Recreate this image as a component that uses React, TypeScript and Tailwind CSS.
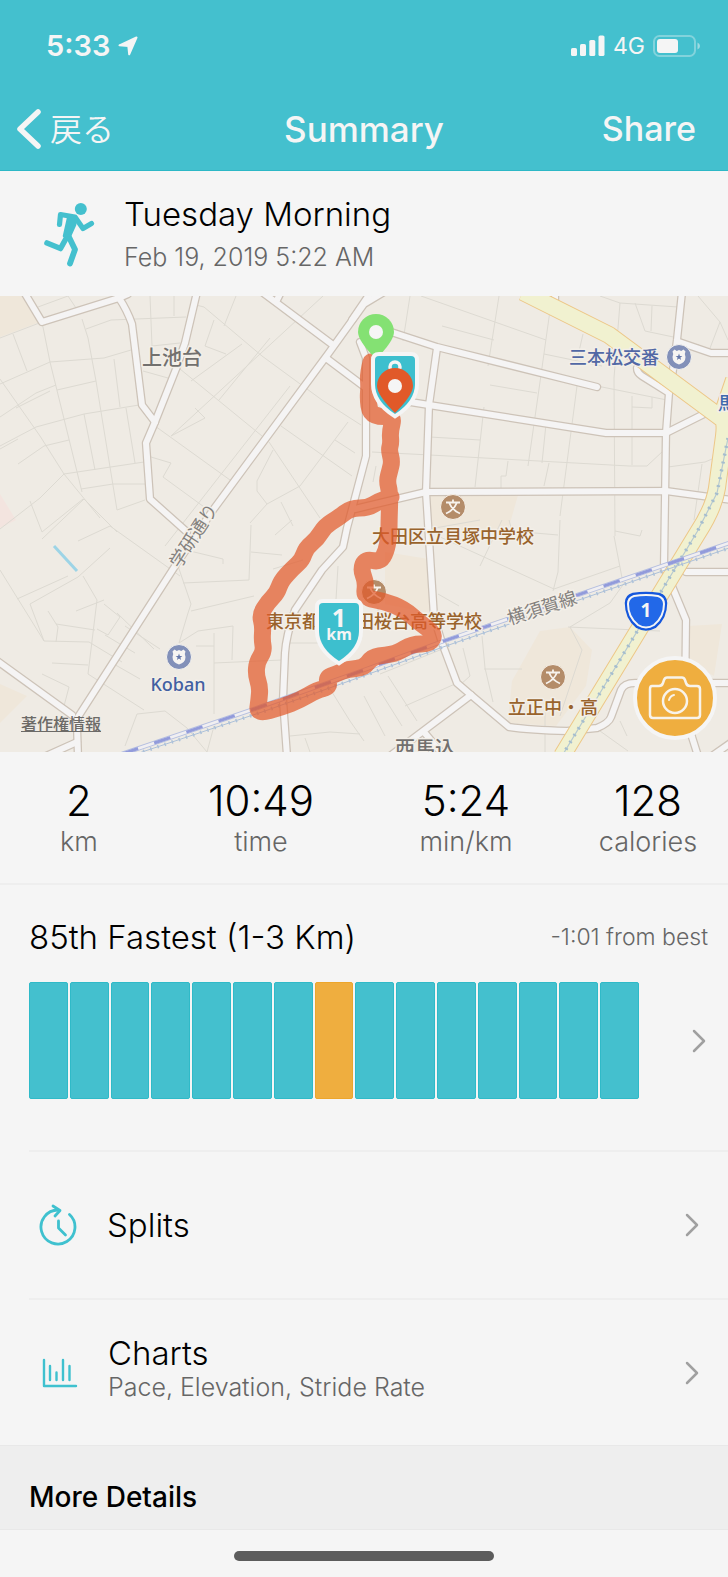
import React from "react";

const inter = "font-['Inter','Noto_Sans_CJK_JP',sans-serif]";

function StatusBar() {
  return (
    <div className="flex h-[91px] items-center justify-between pl-[46px] pr-[27px]">
      <div className="flex items-center gap-2">
        <span className="text-[29px] leading-8 font-semibold">5:33</span>
        <svg viewBox="0 0 20 20" className="h-5 w-5" fill="currentColor" stroke="currentColor" strokeWidth="2" strokeLinejoin="round" aria-hidden="true">
          <path d="M18.500 1.500 11.200 18.300 10.300 9.900 1.500 9.300Z" />
        </svg>
      </div>
      <div className="flex items-center gap-2">
        <svg viewBox="0 0 34 22" className="h-[22px] w-[34px]" fill="currentColor" aria-hidden="true">
          <rect x="0" y="13" width="6" height="8" rx="1.600" />
          <rect x="9" y="9" width="6" height="12" rx="1.600" />
          <rect x="18.300" y="5" width="6" height="16" rx="1.600" />
          <rect x="27.500" y="0.500" width="6" height="20.500" rx="1.600" />
        </svg>
        <span className="text-[23px] leading-8">4G</span>
        <svg viewBox="0 0 48 24" className="h-6 w-12" fill="none" aria-hidden="true">
          <rect x="1" y="2" width="41" height="20" rx="5.500" stroke="#f5f5f5" strokeOpacity=".35" strokeWidth="2" />
          <rect x="4" y="5" width="21" height="14" rx="3" fill="#f5f5f5" />
          <path d="M44.500 8.500q2.500 1 2.500 3.500t-2.500 3.500z" fill="#f5f5f5" fillOpacity=".5" />
        </svg>
      </div>
    </div>
  );
}

function Header() {
  return (
    <header className="border-b border-[#2db8c6] bg-[#44c0ce] text-[#f5f5f5]">
      <StatusBar />
      <nav className="grid h-[79px] grid-cols-3 items-center px-4 pb-1">
        <button type="button" className="flex items-center gap-2 justify-self-start">
          <svg viewBox="0 0 26 42" className="h-[42px] w-[26px]" fill="none" stroke="currentColor" strokeWidth="5.500" strokeLinecap="round" strokeLinejoin="round" aria-hidden="true">
            <path d="M22 4 4 21 22 38" />
          </svg>
          <span className="pb-1 font-['Noto_Sans_CJK_JP',sans-serif] text-[32px] leading-10 font-[350]">戻る</span>
        </button>
        <h1 className="justify-self-center text-[35px] leading-10 font-medium">Summary</h1>
        <button type="button" className="justify-self-end pr-4 text-[34px] leading-10 font-medium">Share</button>
      </nav>
    </header>
  );
}

function Runner() {
  return (
    <svg viewBox="0 0 52 66" className="h-[66px] w-[52px] shrink-0" fill="none" stroke="#44c0ce" strokeLinecap="round" strokeLinejoin="round" aria-hidden="true">
      <circle cx="37.800" cy="8" r="6" fill="#44c0ce" stroke="none" />
      <path d="M16.500 23.500 17.500 13.500 32 16 40 27.500 48.500 22.500" strokeWidth="5.200" />
      <path d="M4 42 17.500 47.500 25 34" strokeWidth="5.600" />
      <path d="M24.500 33 32 48.500 27 62.500" strokeWidth="5.800" />
      <path d="M25.500 15 33.500 17 32 24 27.500 34 21 35Z" fill="#44c0ce" strokeWidth="2.500" />
    </svg>
  );
}

const minorStreets = [
  "M0 88 50 66 104 62 131 54 M42 26 50 66 82 196 M0 83 40 140 64 178 100 222 M13 38 27 75 M38 11 68 0 M68 0 80 18",
  "M0 121 36 97 56 89 M16 112 50 95 M0 42 42 26 M57 94 96 85 88 42 82 23 M86 33 111 24 186 21 M150 0 152 50 M174 0 174 20",
  "M0 150 36 131 84 118 139 109 M0 153 18 143 M18 168 44 150 69 144 M96 85 117 214 145 204 M84 118 95 174 M114 63 120 111 M126 112 135 167",
  "M64 178 144 166 M81 193 113 188 145 188 M64 178 40 202 0 233 M84 203 42 243 M84 203 117 236 M30 205 42 236 83 203",
  "M143 75 168 82 M152 50 180 47 M196 9 204 11 262 60 322 104 361 129 M236 0 224 30 M214 24 205 50 226 58",
  "M180 73 262 140 M242 48 191 85 M270 42 219 104 M323 0 171 140 M195 112 205 122 171 140 M155 130 230 184 M151 161 171 167 M171 167 163 181 211 216 M290 90 165 250",
  "M281 130 352 180 M269 146 320 222 M273 154 257 185 257 195 267 208 300 190 348 126 M335 144 355 157 M281 206 293 230 M250 227 267 208",
  "M0 274 44 345 M30 308 78 281 110 252 M17 303 68 280 M30 308 44 345 89 346 122 366 M83 280 97 304 88 378 144 414 M48 315 58 331 56 346 M76 315 104 304",
  "M42 378 69 391 64 410 M52 367 88 369 M78 245 110 230 180 280 M104 308 120 321 108 339 97 333 M56 328 95 334 M105 339 135 357 M125 330 160 353",
  "M177 267 191 308 188 317 179 347 M183 287 249 284 251 229 M191 315 254 300 M117 317 154 353 M179 347 198 335 233 330 232 364 M214 337 214 418 M196 350 214 350 M214 367 282 364",
  "M112 367 140 383 M125 450 137 418 165 415 187 432 207 456 M190 255 223 263 223 268 M275 239 292 224 M273 273 303 264 M251 256 282 259 M338 270 335 320",
  "M290 347 322 347 M327 388 350 425 364 445 M290 440 330 436 360 438 M305 442 310 456 M214 430 207 456",
  "M410 0 403 45 M499 0 488 70 M421 0 546 44 M442 30 494 44 M552 0 540 86 528 170 M583 38 577 64",
  "M544 58 602 70 M490 89 537 97 M620 7 614 82 615 240 M597 90 667 104 M600 0 620 7 678 11 M635 7 645 35 678 42 M652 10 651 35",
  "M372 156 430 159 629 170 647 170 663 155 M430 141 480 144 M376 170 373 186 M668 171 705 166 724 158 M702 168 694 224",
  "M484 111 475 191 M546 128 542 167 M508 165 506 180 501 180 501 195 M549 167 544 190 M577 90 560 220 M632 100 632 169 M632 111 652 112 652 101 M698 0 720 26 728 44 M720 26 707 60 698 48",
  "M390 240 480 224 M438 240 554 293 620 270 M502 224 480 270 M560 224 558 276 553 295 M614 240 623 287 M625 286 610 307 570 331",
  "M438 298 459 310 M509 224 512 235 558 239 M615 235 640 240 642 234 M460 340 490 327 616 285 M482 340 485 372 493 406 M463 352 470 380 M484 373 522 373",
  "M455 388 405 410 M445 352 380 378 M568 331 660 335 M570 331 582 354 560 420 M545 406 545 456 M600 435 628 455 M620 425 627 440",
  "M380 395 402 430 M364 400 385 440 M388 380 417 425 M460 389 470 380 M378 330 378 312",
];

const roads = [
  "M24 -4 42 26 119 2 128 -2",
  "M119 2 Q127 14 132 28 L142 109 155 126",
  "M197 -4 185 47 176 73 155 126 146 147 150 203 187 236",
  "M384 -4 364 8 328 58 213 214 177 267 78 421 77 430 78 460",
  "M371 -4 352 24 M281 -4 277 4",
  "M262 -4 333 49 M326 62 366 92",
  "M-4 364 72 419 M77 446 46 460",
  "M360 46 366 62 366 160 347 232 343 251 322 274 295 314 Q286 340 285 357 L283 404 287 460",
  "M385 34 437 51 597 91",
  "M437 52 429 109 426 196 434 321 442 347 457 387 471 399 509 431 Q530 434 567 435 L597 432 Q609 427 611 421 L621 394 Q624 387 635 387 L732 387",
  "M471 399 390 460 M424 436 444 460",
  "M404 105 429 109 606 137 666 137 706 117",
  "M682 -4 677 44 672 81 669 97 666 137 664 271 686 324 685 410 692 441 698 460",
  "M637 72 Q637 77 642 80 L669 97 M679 46 711 57 732 57",
  "M355 213 426 196 666 195 732 204",
  "M686 276 732 276 M712 460 732 446 M555 -4 555 8",
];

const highway = "M523 -4 609 39 721 122 Q726 124 724 140 L717 192 Q714 212 697 238 L562 460 M721 122 734 84";
const rail = "M122 458 260 411 364 374 441 346 732 246";
const subway = "M136 458 262 416 366 379 443 351 732 251";

const trackPoints: [number, number][] = [
  [371, 66], [368, 78], [369, 90], [368, 103], [370, 117], [380, 121], [394, 120], [390, 136],
  [391, 147], [389, 154], [392, 165], [390, 174], [387, 185], [390, 197], [389, 226], [389, 240],
  [386, 256], [380, 266], [365, 263], [361, 274], [366, 286], [364, 302], [384, 305], [404, 313],
  [420, 327], [435, 338], [430, 348], [412, 348], [397, 357], [386, 359], [372, 361], [364, 372],
  [348, 373], [336, 378], [326, 382], [330, 391], [317, 394], [300, 404], [282, 411], [257, 418],
  [259, 404], [260, 391], [256, 379], [257, 366], [264, 355], [262, 344], [263, 330], [260, 319],
  [268, 306], [277, 297], [281, 285], [293, 272], [302, 264], [306, 252], [317, 243], [325, 230],
  [338, 222], [351, 212], [368, 212], [379, 205], [391, 201],
];

function smooth(points: [number, number][]) {
  const last = points.length - 1;
  const middle = points.slice(1, last).map(([x, y], i) => {
    const [nx, ny] = points[i + 2];
    return `Q${x} ${y} ${(x + nx) / 2} ${(y + ny) / 2}`;
  });
  return `M${points[0].join(" ")}${middle.join("")}L${points[last].join(" ")}`;
}

function School({ x, y }: { x: number; y: number }) {
  return (
    <g transform={`translate(${x} ${y})`}>
      <circle r="12.500" fill="#b48c69" stroke="#f7f1e9" />
      <path d="M0-7.500V-4.500M-7-4.500H7M-4-4.500Q-1 3 7 6.500M4-4.500Q1 3-7 6.500" fill="none" stroke="#f7f3ee" strokeWidth="1.800" />
    </g>
  );
}

function Police({ x, y }: { x: number; y: number }) {
  return (
    <g transform={`translate(${x} ${y})`}>
      <circle r="12.500" fill="#8290b9" stroke="#f5f3ef" />
      <path d="M-6.500-5.500-4.500-7.500-2.200-6 0-7 2.200-6 4.500-7.500 6.500-5.500Q5-3 6.500 0 6.500 5.500 0 7.500-6.500 5.500-6.500 0-5-3-6.500-5.500Z" fill="#f6f4f2" />
      <path d="M0-3.500 .9-1 3.400-1 1.400.6 2.100 3 0 1.600-2.100 3-1.400.6-3.400-1-.9-1Z" fill="#6477aa" />
    </g>
  );
}

function Pin({ x, y, color }: { x: number; y: number; color: string }) {
  return (
    <g transform={`translate(${x} ${y})`}>
      <path d="M0 27Q-18 9-18 0A18 18 0 0 1 18 0Q18 9 0 27Z" fill={color} />
      <circle r="7" fill="#f5f5f5" />
    </g>
  );
}

const shield = "M-16-28H16Q20-28 20-24V0Q20 17 0 30Q-20 17-20 0V-24Q-20-28-16-28Z";

function RouteMap() {
  return (
    <section className="relative overflow-hidden" aria-label="Route map">
      <svg viewBox="0 0 728 456" className="block w-full font-['Noto_Sans_CJK_JP',sans-serif]" role="img" aria-label="Map of the run">
        <rect width="728" height="456" fill="#efebe4" />
        <path d="M0 0H24L40 26 0 41Z M0 388 27 400 0 427Z M430 200 518 199 508 234 430 234Z M385 256 429 263 434 318 385 308Z M540 335 570 331 592 354 586 390 556 430 508 427 512 385Z M688 330 722 328 714 380 687 365Z" fill="#efe7da" />
        <path d="M0 198 16 224 0 232Z" fill="#f3e4df" />
        <g fill="none" stroke="#dddad2" strokeWidth="1">
          {minorStreets.map((d) => <path key={d} d={d} />)}
        </g>
        <g fill="none" stroke="#cdc3b8" strokeWidth="8.500" strokeLinejoin="round" strokeLinecap="round">
          {roads.map((d) => <path key={d} d={d} />)}
        </g>
        <g fill="none" stroke="#f5f4f4" strokeWidth="6" strokeLinejoin="round" strokeLinecap="round">
          {roads.map((d) => <path key={d} d={d} />)}
        </g>
        <g fill="none" strokeLinejoin="round">
          <path d={highway} stroke="#edc787" strokeWidth="18" />
          <path d={highway} stroke="#f1f1d0" strokeWidth="16" />
          <path d="M728 142 717 197 697 236 562 460" stroke="#b5c9d0" strokeWidth="1.200" />
          <path d="M728 142 717 197 697 236 562 460" stroke="#a5bdce" strokeWidth="3.500" strokeDasharray="2 6" />
          <path d={rail} stroke="#b5bfe0" strokeWidth="4.500" />
          <path d={rail} stroke="#f1eff1" strokeWidth="2.800" />
          <path d={rail} stroke="#929bdb" strokeWidth="3" strokeDasharray="17 17" />
          <path d={subway} stroke="#adc1d9" strokeWidth="1" />
          <path d={subway} stroke="#adc1d9" strokeWidth="3.500" strokeDasharray="1.500 6" />
          <path d="M54 250 77 275" stroke="#9dd4e6" strokeWidth="3" />
        </g>

        <g className="font-medium" paintOrder="stroke" stroke="#f3efe8" strokeWidth="3" strokeLinejoin="round">
          <text x="172" y="69" textAnchor="middle" fontSize="20" fill="#72706e">上池台</text>
          <text x="425" y="460" textAnchor="middle" fontSize="20" fill="#72706e">西馬込</text>
          <text x="614" y="68" textAnchor="middle" fontSize="18" fill="#5268a5">三本松交番</text>
          <text x="178" y="395" textAnchor="middle" fontSize="18" fill="#4260a2" className="font-['Noto_Sans',sans-serif]">Koban</text>
          <text x="718" y="114" fontSize="18" fill="#3d69ae">馬込</text>
          <text x="453" y="247" textAnchor="middle" fontSize="18" fill="#99632c">大田区立貝塚中学校</text>
          <text x="266" y="332" fontSize="18" fill="#99632c">東京都</text>
          <text x="482" y="332" textAnchor="end" fontSize="18" fill="#99632c">田桜台高等学校</text>
          <text x="553" y="418" textAnchor="middle" fontSize="18" fill="#99632c">立正中・高</text>
        </g>
        <g paintOrder="stroke" stroke="#f3efe8" strokeWidth="3" fontSize="18" fill="#84817e" textAnchor="middle">
          <text transform="translate(199 243) rotate(-57)">学研通り</text>
          <text transform="translate(544 318) rotate(-18)">横須賀線</text>
        </g>
        <School x={453} y={211} />
        <School x={374} y={296} />
        <School x={553} y={381} />
        <Police x={679} y={61} />
        <Police x={179} y={361} />

        <path d={smooth(trackPoints)} fill="none" stroke="#e25a2b" strokeOpacity=".72" strokeWidth="17" strokeLinejoin="round" strokeLinecap="round" />

        <g transform="translate(646 316)">
          <path d="M-13-18Q0-20 13-18Q20-16 20-9Q20 6 9 15Q0 20-9 15Q-20 6-20-9Q-20-16-13-18Z" fill="#2268e8" stroke="#1557dc" strokeWidth="2.500" />
          <path d="M-12-16Q0-18 12-16Q18-14 18-8Q18 5 8 13Q0 18-8 13Q-18 5-18-8Q-18-14-12-16Z" fill="none" stroke="#f5f5f5" strokeWidth="2" />
          <text y="5" textAnchor="middle" fontSize="19" className="font-['Noto_Sans',sans-serif] font-bold" fill="#f5f5f5">1</text>
        </g>

        <Pin x={376} y={36} color="#84e173" />
        <g transform="translate(395 88)">
          <path d={shield} fill="#3dbfce" stroke="#f5f5f5" strokeWidth="8" />
          <path d={shield} fill="#3dbfce" />
          <circle cy="-17" r="5" fill="none" stroke="#f5f5f5" strokeWidth="3.500" />
        </g>
        <Pin x={395} y={90} color="#e15929" />
        <g transform="translate(339 335)">
          <path d={shield} fill="#3dbfce" stroke="#f5f5f5" strokeWidth="8" />
          <path d={shield} fill="#3dbfce" />
          <g className="font-['Noto_Sans',sans-serif] font-bold" textAnchor="middle" fill="#f5f5f5">
            <text y="-4" fontSize="25">1</text>
            <text y="9" fontSize="16">km</text>
          </g>
        </g>
      </svg>
      <a href="#legal" className="absolute bottom-4 left-[21px] text-[16px] leading-6 font-medium text-[#6c6a67] underline">著作権情報</a>
      <button type="button" aria-label="Add photo" className="absolute right-[11px] bottom-3 flex h-[84px] w-[84px] items-center justify-center rounded-full border-4 border-[#f5f5f5] bg-[#efae3f]">
        <svg viewBox="0 0 54 44" className="h-11 w-[54px]" fill="none" stroke="#f8f3ea" strokeWidth="2.500" strokeLinejoin="round" strokeLinecap="round" aria-hidden="true">
          <path d="M4 10H11Q14 10 15 7L16 4Q17 1.500 19 1.500H34Q36 1.500 37 4L38 7Q39 10 42 10H49Q52 10 52 13V39Q52 42 49 42H5Q2 42 2 39V13Q2 10 4 10Z" />
          <circle cx="27" cy="25" r="12" />
          <path d="M21 24Q22 20 26 19" strokeWidth="2" />
        </svg>
      </button>
    </section>
  );
}

const stats = [
  { value: "2", label: "km" },
  { value: "10:49", label: "time" },
  { value: "5:24", label: "min/km" },
  { value: "128", label: "calories" },
];

function Chevron() {
  return (
    <svg viewBox="0 0 14 24" className="h-6 w-[14px] shrink-0" fill="none" stroke="#a0a0a0" strokeWidth="2.500" strokeLinecap="round" strokeLinejoin="round" aria-hidden="true">
      <path d="M2 2 12 12 2 22" />
    </svg>
  );
}

function Ranking() {
  return (
    <section>
      <div className="flex items-center justify-between pt-8 pr-5 pl-[29px]">
        <h2 className="text-[33px] leading-10 font-light text-black">85th Fastest (1-3 Km)</h2>
        <span className="text-[23px] leading-10 font-light text-[#666]">-1:01 from best</span>
      </div>
      <a href="#ranking" aria-label="Compare with other runs" className="flex items-center justify-between pt-[25px] pr-[22px] pb-[51px] pl-[29px]">
        <div className="mr-[53px] grid h-[117px] flex-1 grid-cols-15 gap-[2px]">
          {Array.from({ length: 15 }, (_, i) => (
            <div key={i} className={i === 7 ? "rounded-[2px] border border-[#eda62b] bg-[#efae3f]" : "rounded-[2px] border border-[#2fbac8] bg-[#44c0ce]"} />
          ))}
        </div>
        <Chevron />
      </a>
    </section>
  );
}

export default function App() {
  return (
    <main className={`flex min-h-screen flex-col bg-[#f5f5f5] ${inter}`}>
      <Header />
      <section className="flex h-[125px] items-center gap-[29px] pl-[43px]">
        <Runner />
        <div className="pt-[2px]">
          <h2 className="text-[33px] leading-[44px] font-light text-black">Tuesday Morning</h2>
          <p className="text-[25px] leading-[42px] font-light text-[#666]">Feb 19, 2019 5:22 AM</p>
        </div>
      </section>
      <RouteMap />
      <dl className="grid grid-cols-[158fr_206fr_204fr_160fr] border-b-2 border-[#eee] pt-6 pb-[25px] text-center font-light">
        {stats.map((s) => (
          <div key={s.label} className="flex flex-col-reverse">
            <dt className="text-[27px] leading-8 text-[#666]">{s.label}</dt>
            <dd className="text-[42px] leading-[50px] text-black">{s.value}</dd>
          </div>
        ))}
      </dl>
      <Ranking />
      <a href="#splits" className="ml-[29px] flex h-[148px] items-center border-t-2 border-[#eee] pr-[29px]">
        <svg viewBox="0 0 38 42" className="ml-[10px] h-[42px] w-[38px] shrink-0" fill="none" stroke="#3fc1cf" strokeWidth="2.800" strokeLinecap="round" strokeLinejoin="round" aria-hidden="true">
          <path d="M30.500 10.500A17 17 0 1 1 19 6" />
          <path d="M14 2 21 6.500 16 12M19.500 17V24L26.500 31" />
        </svg>
        <span className="ml-[30px] flex-1 text-[33px] leading-10 font-light text-black">Splits</span>
        <Chevron />
      </a>
      <a href="#charts" className="ml-[29px] flex h-[147px] items-center border-t-2 border-[#eee] pr-[29px]">
        <svg viewBox="0 0 36 30" className="ml-[13px] h-[30px] w-9 shrink-0" fill="none" stroke="#3fc1cf" strokeWidth="2.400" strokeLinecap="round" strokeLinejoin="round" aria-hidden="true">
          <path d="M2 2V28H34M8 8V22M14.500 14.500V22M21 2V22M27.500 8V22" />
        </svg>
        <span className="ml-[30px] flex flex-1 flex-col pb-2 font-light">
          <span className="text-[33px] leading-9 text-black">Charts</span>
          <span className="text-[25px] leading-8 text-[#666]">Pace, Elevation, Stride Rate</span>
        </span>
        <Chevron />
      </a>
      <section className="border-y border-[#e8e8e8] bg-[#eee] pt-[31px] pb-3 pl-[29px]">
        <h2 className="text-[28px] leading-10 font-medium text-black">More Details</h2>
      </section>
      <div className="flex flex-1 items-center justify-center pt-1">
        <div className="h-[10px] w-[260px] rounded-full bg-[#5c5c5c]" />
      </div>
    </main>
  );
}
